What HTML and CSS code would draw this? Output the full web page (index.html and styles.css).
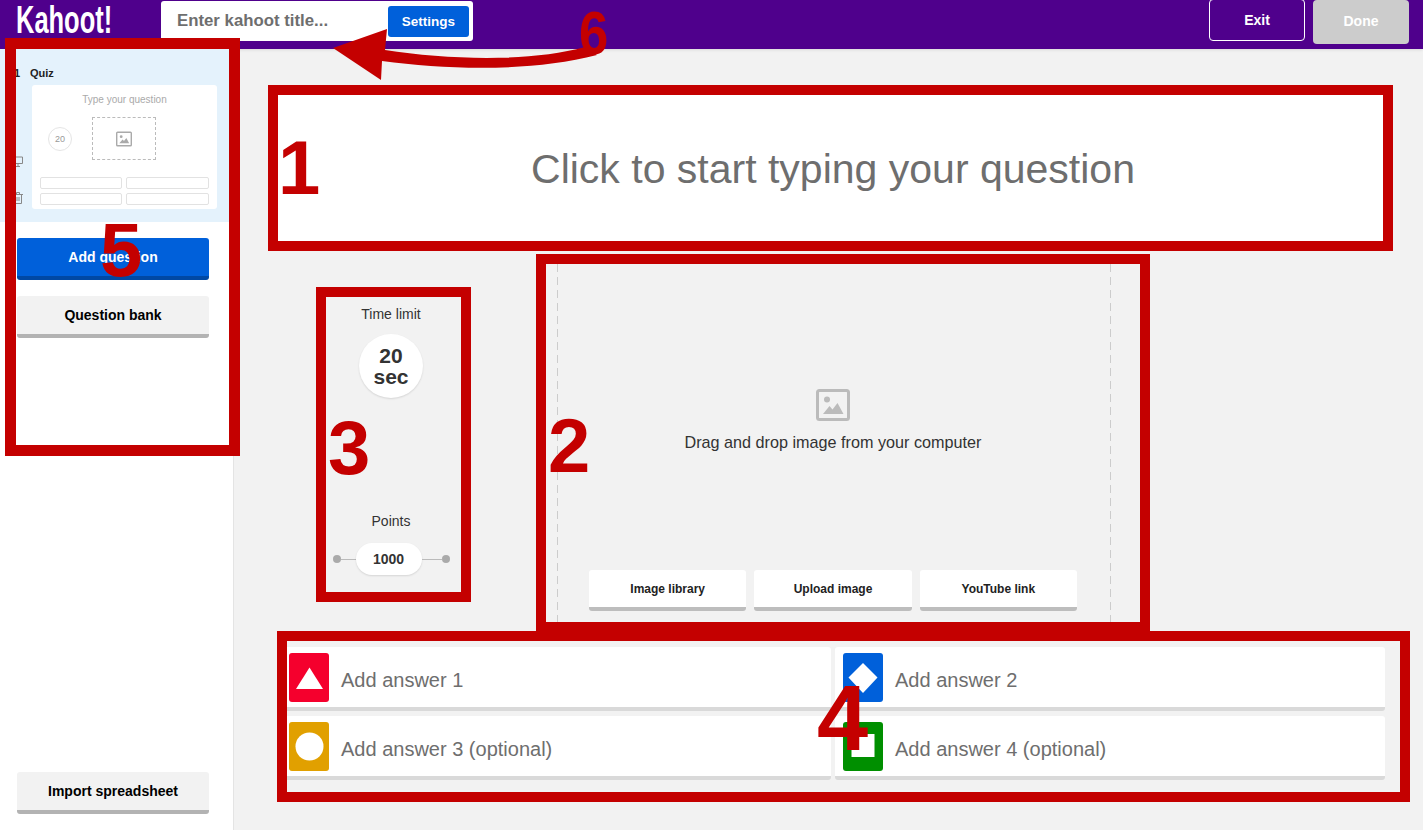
FILE: index.html
```html
<!DOCTYPE html>
<html lang="en">
<head>
    <meta charset="UTF-8">
    <meta name="viewport" content="width=device-width, initial-scale=1.0">
    <title>Kahoot! question editor</title>
    <link rel="stylesheet" href="styles.css">
</head>
<body>
    <header class="topbar">
        <div class="logo-wrap"><div class="logo">Kahoot!</div></div>
        <div class="title-box">
            <span class="title-text">Enter kahoot title...</span>
            <button class="settings-button">Settings</button>
        </div>
        <div class="topbar-actions">
            <button class="exit-button">Exit</button>
            <button class="done-button">Done</button>
        </div>
    </header>

    <div class="editor">
        <aside class="sidebar">
            <div class="slide">
                <div class="slide-head"><span class="slide-num">1</span><span>Quiz</span></div>
                <div class="slide-body">
                    <div class="slide-tools">
                        <svg width="10" height="11" viewBox="0 0 10 11"><path d="M0.5 1h9v6.5h-9zM5 7.5v3M3 10.5h4" fill="none" stroke="#888" stroke-width="1"/></svg>
                        <svg width="10" height="12" viewBox="0 0 10 12"><path d="M0 2.5h10M3.5 2.500v-2h3v2M1.500 2.500v9h7v-9M4 5v4M6 5v4" fill="none" stroke="#888" stroke-width="1"/></svg>
                    </div>
                    <div class="slide-card">
                        <div class="slide-question">Type your question</div>
                        <div class="slide-middle">
                            <div class="slide-time">20</div>
                            <div class="slide-image">
                                <svg width="16" height="16" viewBox="0 0 34 32"><rect x="1.500" y="1.500" width="31" height="29" rx="2" fill="none" stroke="#aaa" stroke-width="3"/><circle cx="11" cy="11" r="3" fill="#aaa"/><path d="M7 25l7-8 3 3 5-6 6 11z" fill="#aaa"/></svg>
                            </div>
                        </div>
                        <div class="slide-answers">
                            <div></div><div></div><div></div><div></div>
                        </div>
                    </div>
                </div>
            </div>
            <button class="side-button side-button-blue">Add question</button>
            <button class="side-button">Question bank</button>
            <button class="side-button side-button-bottom">Import spreadsheet</button>
        </aside>

        <main class="content">
            <div class="question">Click to start typing your question</div>

            <div class="middle">
                <div class="settings-col">
                    <div class="setting-label">Time limit</div>
                    <div class="time-circle">20<br>sec</div>
                    <div class="setting-label points-label">Points</div>
                    <div class="points-slider">
                        <span class="slider-dot"></span>
                        <span class="slider-line slider-line-left"></span>
                        <span class="points-pill">1000</span>
                        <span class="slider-line slider-line-right"></span>
                        <span class="slider-dot"></span>
                    </div>
                </div>
                <div class="media">
                    <svg class="media-icon" width="34" height="32" viewBox="0 0 34 32"><rect x="1.500" y="1.500" width="31" height="29" rx="2" fill="none" stroke="#bbb" stroke-width="3"/><circle cx="11" cy="10.500" r="3" fill="#bbb"/><path d="M7 25l6.500-8 3 3.500 5-6.500 6 11z" fill="#bbb"/></svg>
                    <div class="media-text">Drag and drop image from your computer</div>
                    <div class="media-buttons">
                        <button class="media-button">Image library</button>
                        <button class="media-button">Upload image</button>
                        <button class="media-button">YouTube link</button>
                    </div>
                </div>
            </div>

            <div class="answers">
                <div class="answer">
                    <span class="answer-icon icon-red"><svg width="40" height="49" viewBox="0 0 40 49"><path d="M20.500 14.500L34 36H7z" fill="#fff"/></svg></span>
                    <span>Add answer 1</span>
                </div>
                <div class="answer">
                    <span class="answer-icon icon-blue"><svg width="40" height="49" viewBox="0 0 40 49"><path d="M20 10L34.500 24.500 20 40 5.500 24.500z" fill="#fff"/></svg></span>
                    <span>Add answer 2</span>
                </div>
                <div class="answer">
                    <span class="answer-icon icon-gold"><svg width="40" height="49" viewBox="0 0 40 49"><ellipse cx="20.500" cy="24.500" rx="14" ry="14" fill="#fff"/></svg></span>
                    <span>Add answer 3 (optional)</span>
                </div>
                <div class="answer">
                    <span class="answer-icon icon-green"><svg width="40" height="49" viewBox="0 0 40 49"><rect x="8.500" y="12" width="23" height="23" fill="#fff"/></svg></span>
                    <span>Add answer 4 (optional)</span>
                </div>
            </div>
        </main>
    </div>

    <!-- Red annotations drawn over the screenshot -->
    <div class="mark-box mark-box-1"></div>
    <div class="mark-box mark-box-2"></div>
    <div class="mark-box mark-box-3"></div>
    <div class="mark-box mark-box-4"></div>
    <div class="mark-box mark-box-5"></div>
    <svg class="mark-arrow" width="280" height="70" viewBox="0 0 280 70">
        <path d="M3 38L57 19 55 40C120 50 200 52 255 37L267 45C200 62 120 60 52 51L51 70z" fill="#c40000"/>
    </svg>
    <div class="mark-num mark-num-1">1</div>
    <div class="mark-num mark-num-2">2</div>
    <div class="mark-num mark-num-3">3</div>
    <div class="mark-num mark-num-4">4</div>
    <div class="mark-num mark-num-5">5</div>
    <div class="mark-num mark-num-6">6</div>
</body>
</html>
```

FILE: styles.css
```css
html, body {
    margin: 0;
    height: 830px;
    overflow: hidden;
}
body {
    position: relative;
    font-family: "Liberation Sans", Arial, sans-serif;
    background-color: #f2f2f2;
    color: #333;
}
button {
    font-family: inherit;
    cursor: pointer;
}

/* top bar */
.topbar {
    height: 49px;
    background-color: #4f008c;
    display: flex;
    align-items: flex-start;
    box-shadow: 0 1px 3px rgba(0, 0, 0, 0.1);
}
.logo-wrap {
    width: 160px;
    padding-left: 16px;
    box-sizing: border-box;
    overflow: hidden;
}
.logo {
    color: #fff;
    font-weight: bold;
    font-size: 38px;
    line-height: 40px;
    transform: scaleX(0.67);
    transform-origin: left center;
    white-space: nowrap;
}
.title-box {
    width: 312px;
    height: 40px;
    margin: 1px 0 0 1px;
    background: #fff;
    border-radius: 3px;
    display: flex;
    align-items: center;
    justify-content: space-between;
    padding: 0 4px 0 16px;
    box-sizing: border-box;
}
.title-text {
    font-size: 16.8px;
    font-weight: bold;
    color: #6e6e6e;
}
.settings-button {
    width: 81px;
    height: 31px;
    background-color: #0060da;
    color: #fff;
    border: none;
    border-radius: 3px;
    font-size: 13.5px;
    font-weight: bold;
}
.topbar-actions {
    margin-left: auto;
    padding-right: 14px;
    display: flex;
    gap: 8px;
    align-items: flex-start;
}
.exit-button {
    width: 96px;
    height: 42px;
    margin-top: -1px;
    background: none;
    color: #fff;
    border: 1px solid #fff;
    border-radius: 4px;
    font-size: 14px;
    font-weight: bold;
}
.done-button {
    width: 96px;
    height: 44px;
    padding-bottom: 3px;
    background-color: #ccc;
    color: #fff;
    border: none;
    border-radius: 4px;
    font-size: 14px;
    font-weight: bold;
}

.editor {
    display: flex;
    height: 781px;
}

/* left column */
.sidebar {
    width: 234px;
    box-sizing: border-box;
    background: #fff;
    border-right: 1px solid #e4e4e4;
    display: flex;
    flex-direction: column;
}
.slide {
    height: 173px;
    box-sizing: border-box;
    background-color: #e4f2fc;
    padding: 17px 0 0 14px;
}
.slide-head {
    display: flex;
    height: 14px;
    line-height: 14px;
    font-size: 11px;
    font-weight: bold;
    color: #222;
}
.slide-num {
    width: 16px;
}
.slide-body {
    display: flex;
    margin-top: 5px;
}
.slide-tools {
    width: 19px;
    margin-left: -1px;
    padding-top: 71px;
    display: flex;
    flex-direction: column;
    gap: 25px;
}
.slide-card {
    width: 185px;
    height: 124px;
    box-sizing: border-box;
    background: #fff;
    border-radius: 3px;
    padding: 9px 8px 0;
}
.slide-question {
    text-align: center;
    font-size: 10px;
    line-height: 12px;
    color: #aaa;
}
.slide-middle {
    display: flex;
    align-items: center;
    margin: 11px 0 0 8px;
}
.slide-time {
    width: 24px;
    height: 24px;
    box-sizing: border-box;
    border: 1px solid #e5e5e5;
    border-radius: 50%;
    font-size: 9px;
    line-height: 22px;
    text-align: center;
    color: #999;
}
.slide-image {
    width: 64px;
    height: 43px;
    box-sizing: border-box;
    margin-left: 20px;
    border: 1px dashed #bbb;
    display: flex;
    align-items: center;
    justify-content: center;
}
.slide-answers {
    display: grid;
    grid-template-columns: 82px 83px;
    grid-auto-rows: 12px;
    gap: 4px;
    margin-top: 17px;
}
.slide-answers div {
    border: 1px solid #e2e2e2;
    border-radius: 2px;
}
.side-button {
    height: 42px;
    margin: 16px 24px 0 17px;
    background-color: #f2f2f2;
    border: none;
    border-bottom: 4px solid #b3b3b3;
    border-radius: 3px;
    color: #000;
    font-size: 14px;
    font-weight: bold;
    flex-shrink: 0;
}
.side-button-blue {
    background-color: #0060da;
    border-bottom-color: #0048a4;
    color: #fff;
}
.side-button-bottom {
    margin-top: auto;
    margin-bottom: 16px;
}

/* main area */
.content {
    flex: 1;
    padding: 46px 38px 0 47px;
}
.question {
    height: 146px;
    box-sizing: border-box;
    margin: 0 -6px;
    padding-top: 2px;
    background: #fff;
    border-radius: 3px;
    display: flex;
    align-items: center;
    justify-content: center;
    font-size: 41px;
    color: #6e6e6e;
}
.middle {
    display: flex;
    height: 358px;
    margin-top: 23px;
}
.settings-col {
    width: 220px;
    margin-right: 56px;
    padding-top: 42px;
    box-sizing: border-box;
    display: flex;
    flex-direction: column;
    align-items: center;
}
.setting-label {
    font-size: 14px;
    line-height: 16px;
    color: #333;
}
.time-circle {
    width: 64px;
    height: 64px;
    margin-top: 12px;
    background: #fff;
    border-radius: 50%;
    box-shadow: 0 1px 2px rgba(0, 0, 0, 0.12);
    display: flex;
    align-items: center;
    justify-content: center;
    text-align: center;
    font-size: 21px;
    line-height: 21px;
    font-weight: bold;
}
.points-label {
    margin-top: 115px;
}
.points-slider {
    display: flex;
    align-items: center;
    width: 117px;
    margin-top: 14px;
}
.slider-dot {
    width: 8px;
    height: 8px;
    border-radius: 50%;
    background-color: #aaa;
}
.slider-line {
    height: 1px;
    background-color: #bbb;
}
.slider-line-left { width: 15px; }
.slider-line-right { width: 20px; }
.points-pill {
    width: 66px;
    height: 32px;
    background: #fff;
    border-radius: 16px;
    box-shadow: 0 1px 2px rgba(0, 0, 0, 0.12);
    text-align: center;
    font-size: 14px;
    line-height: 32px;
    font-weight: bold;
}
.media {
    width: 554px;
    box-sizing: border-box;
    background-image: repeating-linear-gradient(#ccc 0 8px, transparent 8px 13px), repeating-linear-gradient(#ccc 0 8px, transparent 8px 13px);
    background-size: 1px 100%;
    background-position: left top, right top;
    background-repeat: no-repeat;
    padding: 125px 34px 11px 32px;
    display: flex;
    flex-direction: column;
    align-items: center;
}
.media-text {
    margin-top: 13px;
    font-size: 16.2px;
    line-height: 17px;
    color: #333;
}
.media-buttons {
    display: flex;
    gap: 8px;
    width: 100%;
    margin-top: auto;
}
.media-button {
    flex: 1;
    height: 41px;
    background: #fff;
    border: none;
    border-bottom: 4px solid #bdbdbd;
    border-radius: 3px;
    color: #222;
    font-size: 12px;
    font-weight: bold;
}
.answers {
    display: grid;
    grid-template-columns: 550px 550px;
    grid-auto-rows: 64px;
    gap: 5px 4px;
    margin-top: 25px;
}
.answer {
    box-sizing: border-box;
    background: #fff;
    border-bottom: 4px solid #d9d9d9;
    border-radius: 3px;
    padding: 6px 0 0 8px;
    display: flex;
    align-items: center;
    gap: 12px;
    font-size: 20px;
    color: #6e6e6e;
}
.answer-icon {
    width: 40px;
    height: 49px;
    align-self: flex-start;
    border-radius: 3px;
}
.answer-icon svg {
    display: block;
}
.icon-red { background-color: #f5002d; }
.icon-blue { background-color: #0060da; }
.icon-gold { background-color: #e1a000; }
.icon-green { background-color: #008f00; }

/* annotations */
.mark-box {
    position: absolute;
    box-sizing: border-box;
    border: 10px solid #c40000;
}
.mark-box-1 { left: 268px; top: 85px; width: 1125px; height: 166px; }
.mark-box-2 { left: 536px; top: 254px; width: 614px; height: 378px; }
.mark-box-3 { left: 316px; top: 287px; width: 155px; height: 315px; }
.mark-box-4 { left: 277px; top: 631px; width: 1133px; height: 171px; }
.mark-box-5 { left: 5px; top: 38px; width: 235px; height: 418px; border-width: 11px; }
.mark-arrow {
    position: absolute;
    left: 330px;
    top: 10px;
}
.mark-num {
    position: absolute;
    color: #c40000;
    font-weight: bold;
    font-size: 76px;
    line-height: 1;
}
.mark-num-1 { left: 278px; top: 130px; }
.mark-num-2 { left: 548px; top: 408px; }
.mark-num-3 { left: 328px; top: 410px; }
.mark-num-4 { left: 817px; top: 672px; font-size: 92px; }
.mark-num-5 { left: 100px; top: 212px; }
.mark-num-6 { left: 579px; top: 2px; font-size: 62px; transform: scaleX(0.85); transform-origin: left top; }
```
